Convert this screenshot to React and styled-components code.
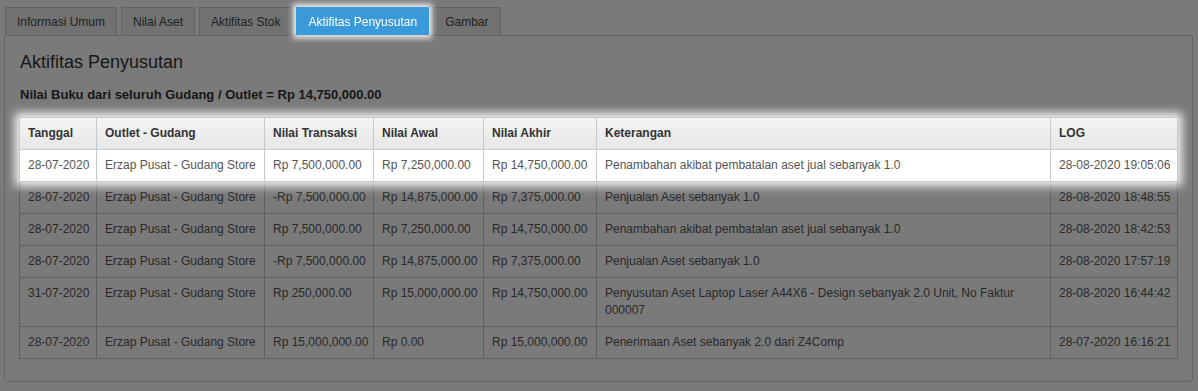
import React from 'react'
import styled, { createGlobalStyle } from 'styled-components'

// Global styles
const GlobalStyle = createGlobalStyle`
  * { box-sizing: border-box; }
  html, body {
    margin: 0;
    background: #ffffff;
    font-family: 'Liberation Sans', Arial, sans-serif;
    font-size: 12px;
    color: #555;
  }
`

// Styled components
const Page = styled.div`
  padding: 7px 5px 10px 4px;
`

const Overlay = styled.div`
  position: fixed;
  inset: 0;
  z-index: 10;
  background: rgba(0, 0, 0, 0.52);
  pointer-events: none;
`

const TabBar = styled.ul`
  display: flex;
  gap: 4px;
  margin: 0;
  padding: 0 0 0 1px;
  list-style: none;
`

const Tab = styled.li`
  height: 28px;
  padding: 0 11px;
  display: flex;
  align-items: center;
  font-size: 12px;
  border: 1px solid ${p => (p.$active ? '#3a9ad9' : '#cfcfcf')};
  border-bottom: none;
  background: ${p => (p.$active ? '#3a9ad9' : '#eeeeee')};
  color: ${p => (p.$active ? '#ffffff' : '#444')};
  position: ${p => (p.$active ? 'relative' : 'static')};
  z-index: ${p => (p.$active ? 11 : 'auto')};
  box-shadow: ${p => (p.$active ? '0 0 6px 3px rgba(255,255,255,0.9)' : 'none')};
`

const Panel = styled.div`
  border: 1px solid #d2d2d2;
  border-radius: 0 0 4px 4px;
  padding: 14px 14px 22px;
`

const Title = styled.h3`
  margin: 2px 0 0;
  padding-left: 1px;
  font-size: 18px;
  line-height: 20px;
  font-weight: normal;
  color: #333;
`

const Summary = styled.h4`
  margin: 14px 0 13px;
  padding-left: 1px;
  font-size: 13px;
  line-height: 18px;
  font-weight: bold;
  color: #333;
`

const Table = styled.div`
  display: flex;
  flex-direction: column;
`

const Highlight = styled.div`
  position: relative;
  z-index: 11;
  background: #fff;
  box-shadow: 0 0 9px 4px rgba(255, 255, 255, 0.92);
`

const Row = styled.div`
  display: grid;
  grid-template-columns: 77px 168px 109px 110px 113px 454px 127px;
  border-left: 1px solid #c4cbd0;
  border-top: ${p => (p.$head ? '1px solid #c4cbd0' : 'none')};
  background: ${p => (p.$head ? 'linear-gradient(to bottom, #f4f4f4, #e6e6e6)' : '#ffffff')};
`

const Cell = styled.div`
  padding: 7px 8px;
  line-height: 17px;
  border-right: 1px solid #c4cbd0;
  border-bottom: 1px solid #c4cbd0;
  white-space: ${p => (p.$wrap ? 'normal' : 'nowrap')};
  font-weight: ${p => (p.$head ? 'bold' : 'normal')};
  color: ${p => (p.$head ? '#333' : '#555')};
`

// Data
const columns = ['Tanggal', 'Outlet - Gudang', 'Nilai Transaksi', 'Nilai Awal', 'Nilai Akhir', 'Keterangan', 'LOG']

const rows = [
  ['28-07-2020', 'Erzap Pusat - Gudang Store', 'Rp 7,500,000.00', 'Rp 7,250,000.00', 'Rp 14,750,000.00', 'Penambahan akibat pembatalan aset jual sebanyak 1.0', '28-08-2020 19:05:06'],
  ['28-07-2020', 'Erzap Pusat - Gudang Store', '-Rp 7,500,000.00', 'Rp 14,875,000.00', 'Rp 7,375,000.00', 'Penjualan Aset sebanyak 1.0', '28-08-2020 18:48:55'],
  ['28-07-2020', 'Erzap Pusat - Gudang Store', 'Rp 7,500,000.00', 'Rp 7,250,000.00', 'Rp 14,750,000.00', 'Penambahan akibat pembatalan aset jual sebanyak 1.0', '28-08-2020 18:42:53'],
  ['28-07-2020', 'Erzap Pusat - Gudang Store', '-Rp 7,500,000.00', 'Rp 14,875,000.00', 'Rp 7,375,000.00', 'Penjualan Aset sebanyak 1.0', '28-08-2020 17:57:19'],
  ['31-07-2020', 'Erzap Pusat - Gudang Store', 'Rp 250,000.00', 'Rp 15,000,000.00', 'Rp 14,750,000.00', 'Penyusutan Aset Laptop Laser A44X6 - Design sebanyak 2.0 Unit, No Faktur 000007', '28-08-2020 16:44:42'],
  ['28-07-2020', 'Erzap Pusat - Gudang Store', 'Rp 15,000,000.00', 'Rp 0.00', 'Rp 15,000,000.00', 'Penerimaan Aset sebanyak 2.0 dari Z4Comp', '28-07-2020 16:16:21'],
]

const tabs = ['Informasi Umum', 'Nilai Aset', 'Aktifitas Stok', 'Aktifitas Penyusutan', 'Gambar']

function DataRow({ cells }) {
  return (
    <Row>
      {cells.map((c, i) => (
        <Cell key={i} $wrap={i === 5}>{c}</Cell>
      ))}
    </Row>
  )
}

export default function App() {
  const [first, ...rest] = rows
  return (
    <Page>
      <GlobalStyle />
      <TabBar>
        {tabs.map(t => (
          <Tab key={t} $active={t === 'Aktifitas Penyusutan'}>{t}</Tab>
        ))}
      </TabBar>
      <Panel>
        <Title>Aktifitas Penyusutan</Title>
        <Summary>Nilai Buku dari seluruh Gudang / Outlet = Rp 14,750,000.00</Summary>
        <Table>
          <Highlight>
            <Row $head>
              {columns.map(c => (
                <Cell key={c} $head>{c}</Cell>
              ))}
            </Row>
            <DataRow cells={first} />
          </Highlight>
          {rest.map((r, i) => (
            <DataRow key={i} cells={r} />
          ))}
        </Table>
      </Panel>
      <Overlay />
    </Page>
  )
}
